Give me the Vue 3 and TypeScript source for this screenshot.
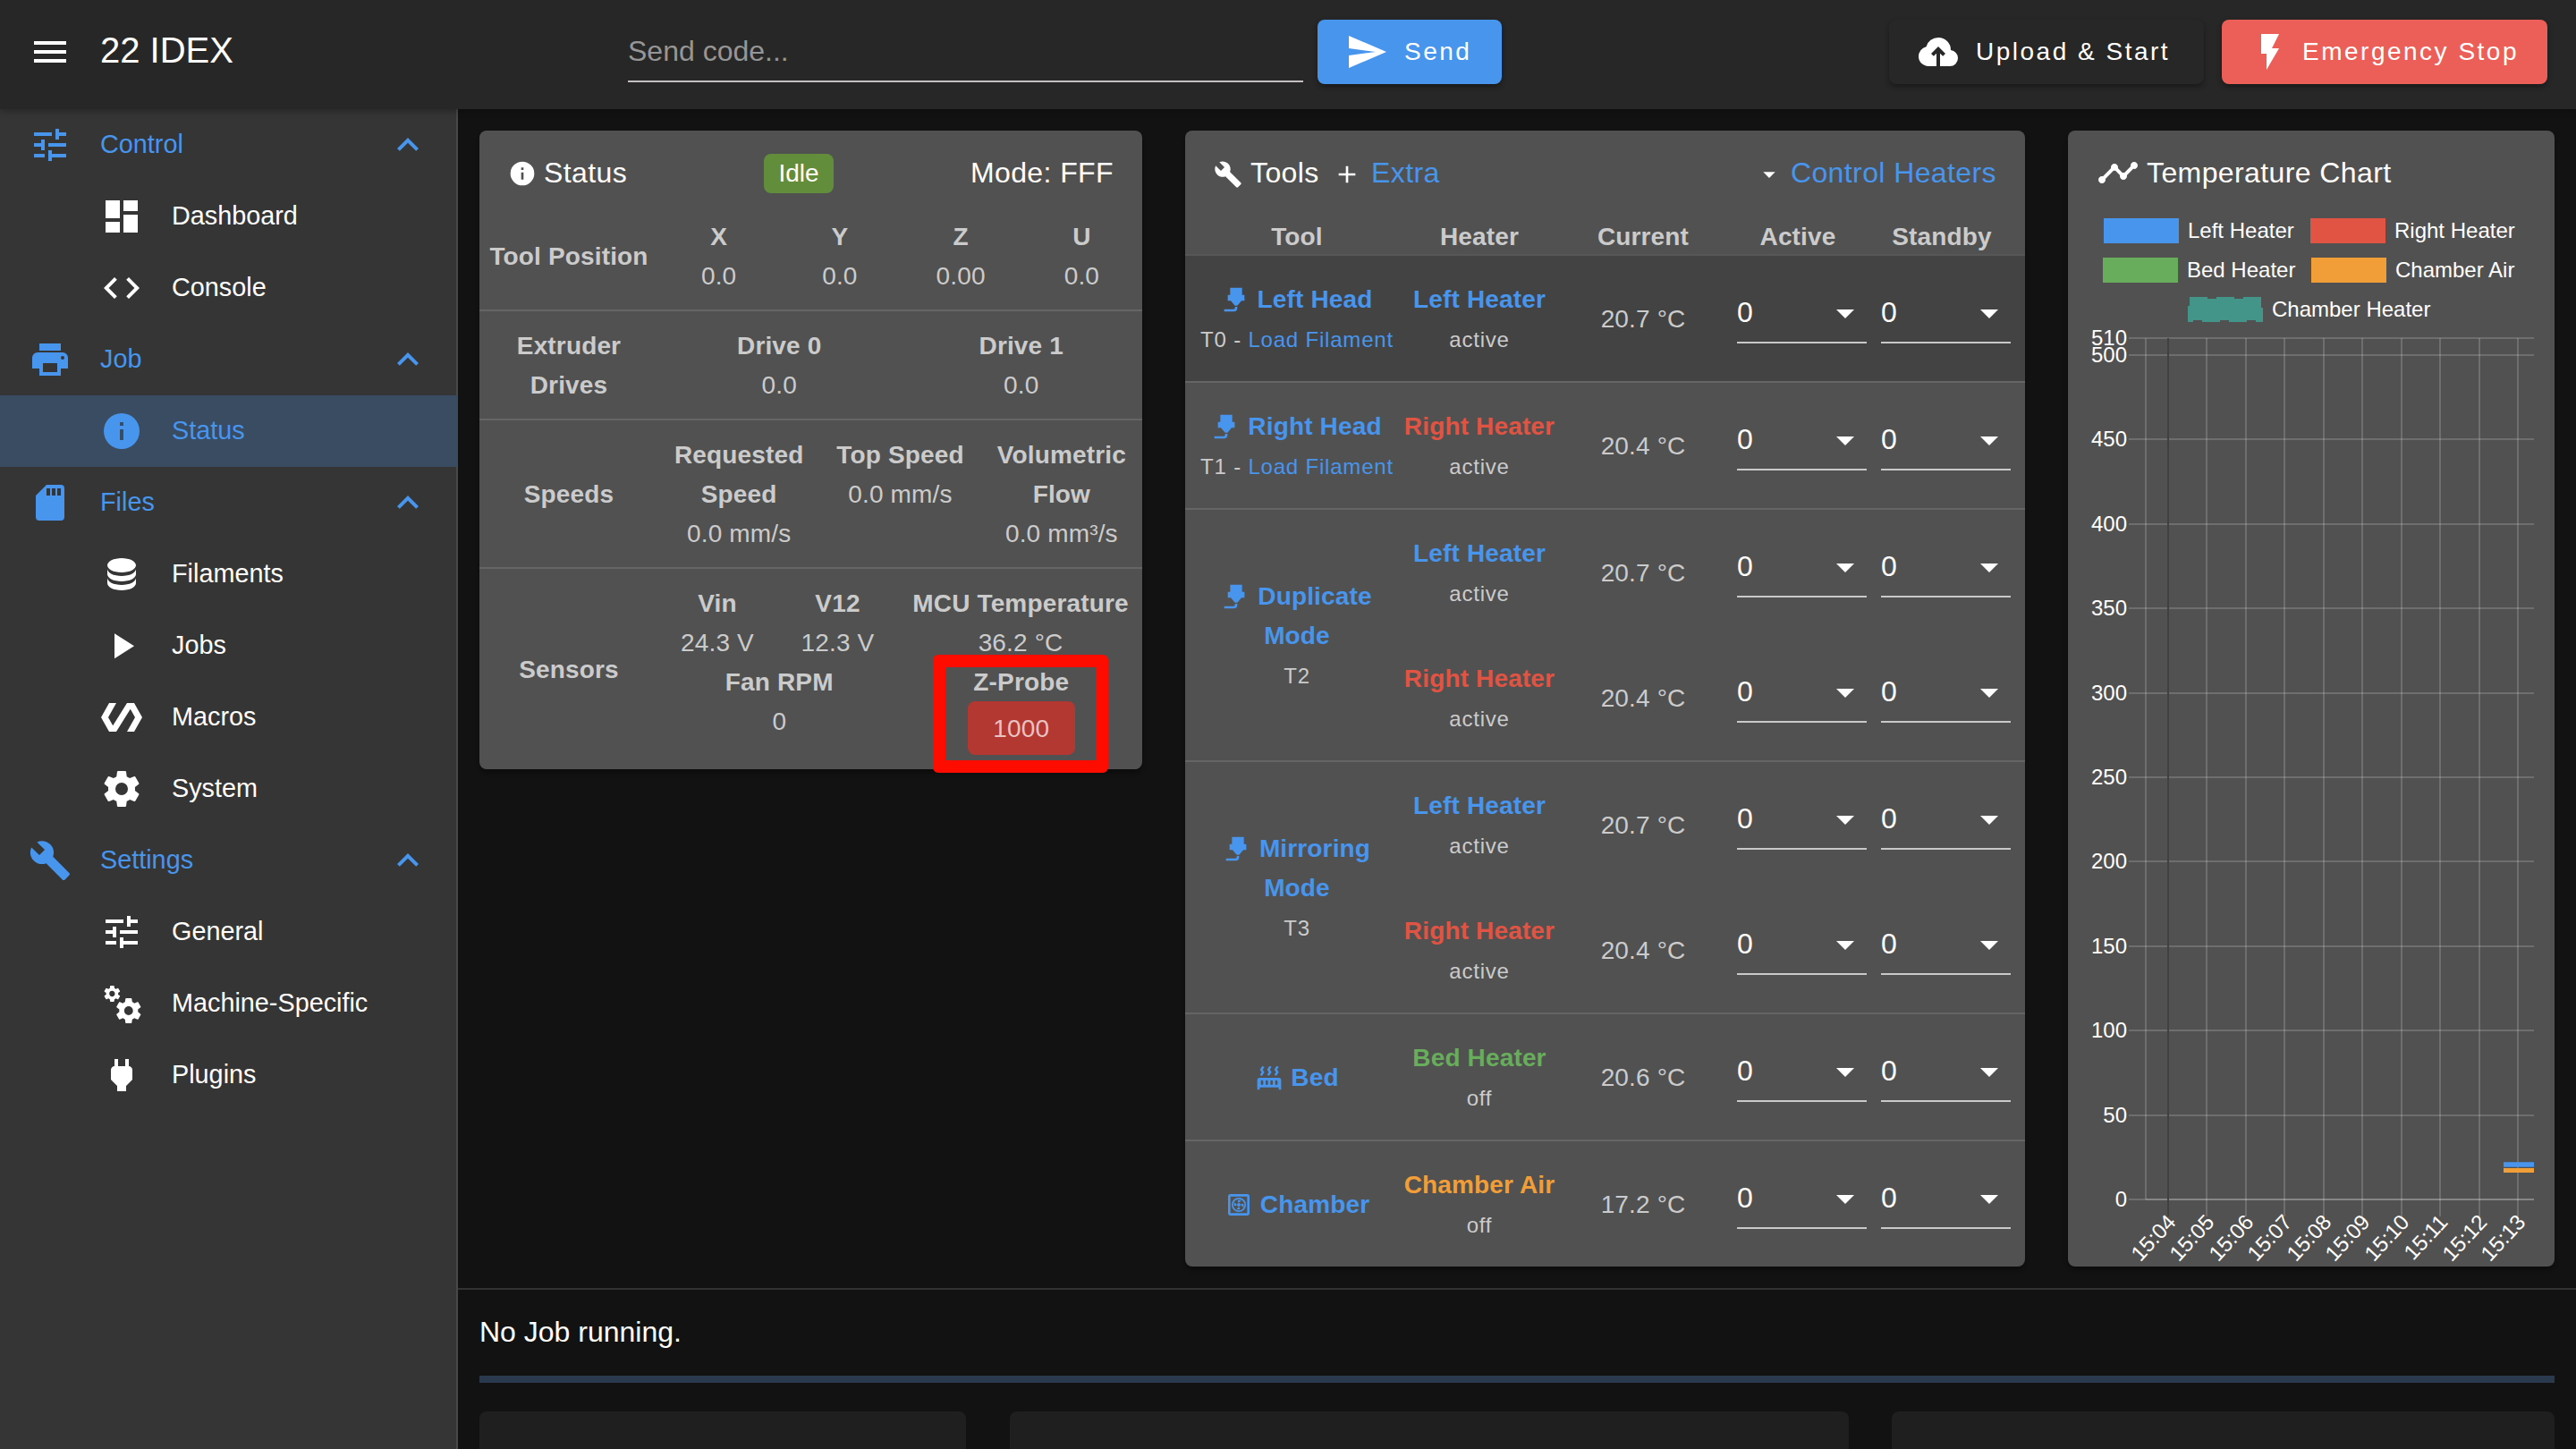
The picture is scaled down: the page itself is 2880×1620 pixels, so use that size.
<script setup lang="ts">
interface NavItem {
  label: string
  icon: string
  group?: boolean
  active?: boolean
}

interface Heater {
  name: string
  tone: string
  state: string
  current: string
}

interface ToolRow {
  icon: string
  lines: string[]
  code?: string
  filament?: boolean
  hovered?: boolean
  heaters: Heater[]
}

const icons: Record<string, string> = {
  menu: 'M3,6H21V8H3V6M3,11H21V13H3V11M3,16H21V18H3V16Z',
  tune: 'M3,17V19H9V17H3M3,5V7H13V5H3M13,21V19H21V17H13V15H11V21H13M7,9V11H3V13H7V15H9V9H7M21,13V11H11V13H21M15,9H17V7H21V5H17V3H15V9Z',
  dashboard: 'M13,3V9H21V3M13,21H21V11H13M3,21H11V15H3M3,13H11V3H3V13Z',
  code: 'M14.6,16.6L19.2,12L14.6,7.4L16,6L22,12L16,18L14.6,16.6M9.4,16.6L4.8,12L9.4,7.4L8,6L2,12L8,18L9.4,16.6Z',
  printer: 'M18,3H6V7H18M19,12A1,1 0 0,1 18,11A1,1 0 0,1 19,10A1,1 0 0,1 20,11A1,1 0 0,1 19,12M16,19H8V14H16M19,8H5A3,3 0 0,0 2,11V17H6V21H18V17H22V11A3,3 0 0,0 19,8Z',
  info: 'M13,9H11V7H13M13,17H11V11H13M12,2A10,10 0 0,0 2,12A10,10 0 0,0 12,22A10,10 0 0,0 22,12A10,10 0 0,0 12,2Z',
  sd: 'M18,8H16V4H18M15,8H13V4H15M12,8H10V4H12M18,2H10L4,8V20A2,2 0 0,0 6,22H18A2,2 0 0,0 20,20V4A2,2 0 0,0 18,2Z',
  database: 'M12,3C7.58,3 4,4.79 4,7C4,9.21 7.58,11 12,11C16.42,11 20,9.21 20,7C20,4.79 16.42,3 12,3M4,9V12C4,14.21 7.58,16 12,16C16.42,16 20,14.21 20,12V9C20,11.21 16.42,13 12,13C7.58,13 4,11.21 4,9M4,14V17C4,19.21 7.58,21 12,21C16.42,21 20,19.21 20,17V14C20,16.21 16.42,18 12,18C7.58,18 4,16.21 4,14Z',
  play: 'M8,5.14V19.14L19,12.14L8,5.14Z',
  polymer: 'M19,4H15L7.1,16.63L4.5,12L9,4H5L0.5,12L5,20H9L16.89,7.37L19.5,12L15,20H19L23.5,12L19,4Z',
  cog: 'M12,15.5A3.5,3.5 0 0,1 8.5,12A3.5,3.5 0 0,1 12,8.5A3.5,3.5 0 0,1 15.5,12A3.5,3.5 0 0,1 12,15.5M19.43,12.97C19.47,12.65 19.5,12.33 19.5,12C19.5,11.67 19.47,11.34 19.43,11L21.54,9.37C21.73,9.22 21.78,8.95 21.66,8.73L19.66,5.27C19.54,5.05 19.27,4.96 19.05,5.05L16.56,6.05C16.04,5.66 15.5,5.32 14.87,5.07L14.5,2.42C14.46,2.18 14.25,2 14,2H10C9.75,2 9.54,2.18 9.5,2.42L9.13,5.07C8.5,5.32 7.96,5.66 7.44,6.05L4.95,5.05C4.73,4.96 4.46,5.05 4.34,5.27L2.34,8.73C2.21,8.95 2.27,9.22 2.46,9.37L4.57,11C4.53,11.34 4.5,11.67 4.5,12C4.5,12.33 4.53,12.65 4.57,12.97L2.46,14.63C2.27,14.78 2.21,15.05 2.34,15.27L4.34,18.73C4.46,18.95 4.73,19.03 4.95,18.95L7.44,17.94C7.96,18.34 8.5,18.68 9.13,18.93L9.5,21.58C9.54,21.82 9.75,22 10,22H14C14.25,22 14.46,21.82 14.5,21.58L14.87,18.93C15.5,18.67 16.04,18.34 16.56,17.94L19.05,18.95C19.27,19.03 19.54,18.95 19.66,18.73L21.66,15.27C21.78,15.05 21.73,14.78 21.54,14.63L19.43,12.97Z',
  wrench: 'M22.7,19L13.6,9.9C14.5,7.6 14,4.9 12.1,3C10.1,1 7.1,0.6 4.7,1.7L9,6L6,9L1.6,4.7C0.4,7.1 0.9,10.1 2.9,12.1C4.8,14 7.5,14.5 9.8,13.6L18.9,22.7C19.3,23.1 19.9,23.1 20.3,22.7L22.6,20.4C23.1,20 23.1,19.3 22.7,19Z',
  cogs: 'M15.9,18.45C17.25,18.45 18.35,17.35 18.35,16C18.35,14.65 17.25,13.55 15.9,13.55C14.54,13.55 13.45,14.65 13.45,16C13.45,17.35 14.54,18.45 15.9,18.45M21.1,16.68L22.58,17.84C22.71,17.95 22.75,18.13 22.66,18.29L21.26,20.71C21.17,20.86 21,20.92 20.83,20.86L19.09,20.16C18.73,20.44 18.33,20.67 17.91,20.85L17.64,22.7C17.62,22.87 17.47,23 17.3,23H14.5C14.32,23 14.18,22.87 14.15,22.7L13.89,20.85C13.46,20.67 13.07,20.44 12.71,20.16L10.96,20.86C10.81,20.92 10.62,20.86 10.54,20.71L9.14,18.29C9.05,18.13 9.09,17.95 9.22,17.84L10.7,16.68L10.65,16L10.7,15.31L9.22,14.16C9.09,14.05 9.05,13.86 9.14,13.71L10.54,11.29C10.62,11.13 10.81,11.07 10.96,11.13L12.71,11.84C13.07,11.56 13.46,11.32 13.89,11.15L14.15,9.29C14.18,9.13 14.32,9 14.5,9H17.3C17.47,9 17.62,9.13 17.64,9.29L17.91,11.15C18.33,11.32 18.73,11.56 19.09,11.84L20.83,11.13C21,11.07 21.17,11.13 21.26,11.29L22.66,13.71C22.75,13.86 22.71,14.05 22.58,14.16L21.1,15.31L21.15,16L21.1,16.68M6.69,8.07C7.56,8.07 8.26,7.37 8.26,6.5C8.26,5.63 7.56,4.92 6.69,4.92A1.58,1.58 0 0,0 5.11,6.5C5.11,7.37 5.82,8.07 6.69,8.07M10.03,6.94L11,7.68C11.07,7.75 11.09,7.87 11.03,7.97L10.13,9.53C10.08,9.63 9.96,9.67 9.86,9.63L8.74,9.18L8,9.62L7.81,10.81C7.79,10.92 7.7,11 7.59,11H5.79C5.67,11 5.58,10.92 5.56,10.81L5.4,9.62L4.64,9.18L3.52,9.63C3.41,9.67 3.3,9.63 3.24,9.53L2.34,7.97C2.28,7.87 2.31,7.75 2.39,7.68L3.34,6.94L3.31,6.5L3.34,6.06L2.39,5.32C2.31,5.25 2.28,5.13 2.34,5.03L3.24,3.47C3.3,3.37 3.41,3.33 3.52,3.37L4.63,3.82L5.4,3.38L5.56,2.19C5.58,2.08 5.67,2 5.79,2H7.59C7.7,2 7.79,2.08 7.81,2.19L8,3.38L8.74,3.82L9.86,3.37C9.96,3.33 10.08,3.37 10.13,3.47L11.03,5.03C11.09,5.13 11.07,5.25 11,5.32L10.03,6.06L10.06,6.5L10.03,6.94Z',
  plug: 'M16,7V3H14V7H10V3H8V7H8C7,7 6,8 6,9V14.5L9.5,18V21H14.5V18L18,14.5V9C18,8 17,7 16,7Z',
  chevron: 'M7.41,15.41L12,10.83L16.59,15.41L18,14L12,8L6,14L7.41,15.41Z',
  send: 'M2,21L23,12L2,3V10L17,12L2,14V21Z',
  cloud: 'M11 20H6.5q-2.28 0-3.89-1.57Q1 16.85 1 14.58q0-1.95 1.17-3.48 1.18-1.53 3.08-1.95.63-2.3 2.5-3.72Q9.63 4 12 4q2.93 0 4.96 2.04Q19 8.07 19 11q1.73.2 2.86 1.5 1.14 1.28 1.14 3 0 1.88-1.31 3.19T18.5 20H13v-7.15l1.6 1.55L16 13l-4-4-4 4 1.4 1.4 1.6-1.55Z',
  flash: 'M7,2V13H10V22L17,10H13L17,2H7Z',
  plus: 'M19,13H13V19H11V13H5V11H11V5H13V11H19V13Z',
  caret: 'M7,10L12,15L17,10H7Z',
  timeline: 'M23,8C23,9.1 22.1,10 21,10C20.82,10 20.65,9.98 20.49,9.93L16.93,13.48C16.98,13.64 17,13.82 17,14C17,15.1 16.1,16 15,16C13.9,16 13,15.1 13,14C13,13.82 13.02,13.64 13.07,13.48L10.52,10.93C10.36,10.98 10.18,11 10,11C9.82,11 9.64,10.98 9.48,10.93L4.93,15.49C4.98,15.65 5,15.82 5,16C5,17.1 4.1,18 3,18C1.9,18 1,17.1 1,16C1,14.9 1.9,14 3,14C3.18,14 3.35,14.02 3.51,14.07L8.07,9.52C8.02,9.36 8,9.18 8,9C8,7.9 8.9,7 10,7C11.1,7 12,7.9 12,9C12,9.18 11.98,9.36 11.93,9.52L14.48,12.07C14.64,12.02 14.82,12 15,12C15.18,12 15.36,12.02 15.52,12.07L19.07,8.51C19.02,8.35 19,8.18 19,8C19,6.9 19.9,6 21,6C22.1,6 23,6.9 23,8Z',
  nozzle: 'M7,2H17V8H19V13H16.5L13,17H11L7.5,13H5V8H7V2M10,22H2V20H10A1,1 0 0,0 11,19V18H13V19A3,3 0 0,1 10,22Z',
  radiator: 'M7.95,3L6.53,5.19L7.95,7.4H7.94L5.95,10.5L4.22,9.6L5.64,7.39L4.22,5.19L6.22,2.09L7.95,3M13.95,2.89L12.53,5.1L13.95,7.3L13.94,7.31L11.95,10.4L10.22,9.5L11.64,7.3L10.22,5.1L12.22,2L13.95,2.89M20,2.89L18.56,5.1L20,7.3V7.31L18,10.4L16.25,9.5L17.67,7.3L16.25,5.1L18.25,2L20,2.89M2,22V14A2,2 0 0,1 4,12H20A2,2 0 0,1 22,14V22H20V20H4V22H2M6,14A1,1 0 0,0 5,15V17A1,1 0 0,0 6,18A1,1 0 0,0 7,17V15A1,1 0 0,0 6,14M10,14A1,1 0 0,0 9,15V17A1,1 0 0,0 10,18A1,1 0 0,0 11,17V15A1,1 0 0,0 10,14M14,14A1,1 0 0,0 13,15V17A1,1 0 0,0 14,18A1,1 0 0,0 15,17V15A1,1 0 0,0 14,14M18,14A1,1 0 0,0 17,15V17A1,1 0 0,0 18,18A1,1 0 0,0 19,17V15A1,1 0 0,0 18,14Z',
  chamber: 'M5,3H19A2,2 0 0,1 21,5V19A2,2 0 0,1 19,21H5A2,2 0 0,1 3,19V5A2,2 0 0,1 5,3M5,5V19H19V5H5M12,6A6,6 0 0,1 18,12A6,6 0 0,1 12,18A6,6 0 0,1 6,12A6,6 0 0,1 12,6M12,7.3A4.7,4.7 0 0,0 7.3,12A4.7,4.7 0 0,0 12,16.7A4.7,4.7 0 0,0 16.7,12A4.7,4.7 0 0,0 12,7.3M12,10.5A1.5,1.5 0 0,1 13.5,12A1.5,1.5 0 0,1 12,13.5A1.5,1.5 0 0,1 10.5,12A1.5,1.5 0 0,1 12,10.5M11.2,8H14L12.6,10H11.2V8M16,11.2V14L14,12.6V11.2H16M12.8,16H10L11.4,14H12.8V16M8,12.8V10L10,11.4V12.8H8Z'
}

const nav: NavItem[] = [
  { label: 'Control', icon: 'tune', group: true },
  { label: 'Dashboard', icon: 'dashboard' },
  { label: 'Console', icon: 'code' },
  { label: 'Job', icon: 'printer', group: true },
  { label: 'Status', icon: 'info', active: true },
  { label: 'Files', icon: 'sd', group: true },
  { label: 'Filaments', icon: 'database' },
  { label: 'Jobs', icon: 'play' },
  { label: 'Macros', icon: 'polymer' },
  { label: 'System', icon: 'cog' },
  { label: 'Settings', icon: 'wrench', group: true },
  { label: 'General', icon: 'tune' },
  { label: 'Machine-Specific', icon: 'cogs' },
  { label: 'Plugins', icon: 'plug' }
]

const left: Heater = { name: 'Left Heater', tone: 'blue', state: 'active', current: '20.7 °C' }
const right: Heater = { name: 'Right Heater', tone: 'red', state: 'active', current: '20.4 °C' }

const tools: ToolRow[] = [
  { icon: 'nozzle', lines: ['Left Head'], code: 'T0', filament: true, hovered: true, heaters: [left] },
  { icon: 'nozzle', lines: ['Right Head'], code: 'T1', filament: true, heaters: [right] },
  { icon: 'nozzle', lines: ['Duplicate', 'Mode'], code: 'T2', heaters: [left, right] },
  { icon: 'nozzle', lines: ['Mirroring', 'Mode'], code: 'T3', heaters: [left, right] },
  { icon: 'radiator', lines: ['Bed'], heaters: [{ name: 'Bed Heater', tone: 'green', state: 'off', current: '20.6 °C' }] },
  { icon: 'chamber', lines: ['Chamber'], heaters: [{ name: 'Chamber Air', tone: 'orange', state: 'off', current: '17.2 °C' }] }
]

const axes = [
  { name: 'X', value: '0.0' },
  { name: 'Y', value: '0.0' },
  { name: 'Z', value: '0.00' },
  { name: 'U', value: '0.0' }
]

// Chart geometry, in the svg's own pixels
const top = 136
const bottom = 1099
const yOf = (v: number): number => bottom - (v * (bottom - top)) / 510
const yTicks: number[] = [510, 500, 450, 400, 350, 300, 250, 200, 150, 100, 50, 0]
const xTicks = ['15:04', '15:05', '15:06', '15:07', '15:08', '15:09', '15:10', '15:11', '15:12', '15:13'].map(
  (label, i) => ({ label, x: Math.round(112 + i * 43.45) })
)
const legend = [
  { label: 'Left Heater', color: '#4895ed', x: 40, y: 2 },
  { label: 'Right Heater', color: '#e15342', x: 271, y: 2 },
  { label: 'Bed Heater', color: '#67ad5b', x: 39, y: 46 },
  { label: 'Chamber Air', color: '#f19e38', x: 272, y: 46 }
]
</script>

<template>
  <div class="app">
    <header class="bar">
      <svg class="i48" viewBox="0 0 24 24"><path :d="icons.menu" /></svg>
      <div class="title">22 IDEX</div>
      <div class="code-input">Send code...</div>
      <div class="btn send"><svg class="i48" viewBox="0 0 24 24"><path :d="icons.send" /></svg>Send</div>
      <div class="btn upload"><svg class="i48" viewBox="0 0 24 24"><path :d="icons.cloud" /></svg>Upload &amp; Start</div>
      <div class="btn stop"><svg class="i48" viewBox="0 0 24 24"><path :d="icons.flash" /></svg>Emergency Stop</div>
    </header>

    <div class="body">
      <nav class="side">
        <div v-for="n in nav" :key="n.label" class="nav-item" :class="{ group: n.group, active: n.active }">
          <svg class="i48" viewBox="0 0 24 24"><path :d="icons[n.icon]" /></svg>
          <span class="nav-label">{{ n.label }}</span>
          <svg v-if="n.group" class="i48" viewBox="0 0 24 24"><path :d="icons.chevron" /></svg>
        </div>
      </nav>

      <main class="main">
        <section class="panels">
          <div class="card status">
            <div class="card-title">
              <svg class="i32" viewBox="0 0 24 24"><path :d="icons.info" /></svg>
              <span class="status-name">Status</span>
              <span class="chip">Idle</span>
              <span class="mode">Mode: FFF</span>
            </div>
            <div class="srow first">
              <div class="slabel"><span>Tool Position</span></div>
              <div class="svals">
                <div class="cells">
                  <div v-for="a in axes" :key="a.name" class="cell"><strong>{{ a.name }}</strong><span>{{ a.value }}</span></div>
                </div>
              </div>
            </div>
            <div class="srow">
              <div class="slabel"><span>Extruder</span><span>Drives</span></div>
              <div class="svals">
                <div class="cells">
                  <div class="cell"><strong>Drive 0</strong><span>0.0</span></div>
                  <div class="cell"><strong>Drive 1</strong><span>0.0</span></div>
                </div>
              </div>
            </div>
            <div class="srow">
              <div class="slabel"><span>Speeds</span></div>
              <div class="svals">
                <div class="cells">
                  <div class="cell"><strong>Requested</strong><strong>Speed</strong><span>0.0 mm/s</span></div>
                  <div class="cell"><strong>Top Speed</strong><span>0.0 mm/s</span></div>
                  <div class="cell"><strong>Volumetric</strong><strong>Flow</strong><span>0.0 mm³/s</span></div>
                </div>
              </div>
            </div>
            <div class="srow">
              <div class="slabel"><span>Sensors</span></div>
              <div class="svals">
                <div class="cells sensors">
                  <div class="cell"><strong>Vin</strong><span>24.3 V</span></div>
                  <div class="cell"><strong>V12</strong><span>12.3 V</span></div>
                  <div class="cell"><strong>MCU Temperature</strong><span>36.2 °C</span></div>
                </div>
                <div class="cells">
                  <div class="cell"><strong>Fan RPM</strong><span>0</span></div>
                  <div class="cell probe"><strong>Z-Probe</strong><span class="probe-value">1000</span><i class="marker"></i></div>
                </div>
              </div>
            </div>
          </div>

          <div class="card tools">
            <div class="card-title">
              <svg class="i32" viewBox="0 0 24 24"><path :d="icons.wrench" /></svg>
              <span class="tools-name">Tools</span>
              <svg class="i32" viewBox="0 0 24 24"><path :d="icons.plus" /></svg>
              <span class="extra">Extra</span>
              <svg class="i32 push" viewBox="0 0 24 24"><path :d="icons.caret" /></svg>
              <span class="heaters-link">Control Heaters</span>
            </div>
            <div class="thead">
              <span>Tool</span><span>Heater</span><span>Current</span><span>Active</span><span>Standby</span>
            </div>
            <div v-for="(t, ti) in tools" :key="ti" class="trow" :class="{ hovered: t.hovered }">
              <div class="tcell">
                <strong class="blue">
                  <svg class="i32 tool-icon" viewBox="0 0 24 24"><path :d="icons[t.icon]" fill-rule="evenodd" /></svg>{{ t.lines[0] }}
                </strong>
                <strong v-if="t.lines[1]" class="blue">{{ t.lines[1] }}</strong>
                <div v-if="t.code"><small>{{ t.code }}<template v-if="t.filament"> - <span class="blue">Load Filament</span></template></small></div>
              </div>
              <div class="theaters">
                <div v-for="h in t.heaters" :key="h.name" class="heater">
                  <div class="hname"><strong :class="h.tone">{{ h.name }}</strong><div><small>{{ h.state }}</small></div></div>
                  <div class="hcur">{{ h.current }}</div>
                  <div class="select">0<svg class="i48" viewBox="0 0 24 24"><path :d="icons.caret" /></svg></div>
                  <div class="select">0<svg class="i48" viewBox="0 0 24 24"><path :d="icons.caret" /></svg></div>
                </div>
              </div>
            </div>
          </div>

          <div class="card chart">
            <div class="card-title">
              <svg class="i48" viewBox="0 0 24 24"><path :d="icons.timeline" /></svg>
              <span class="chart-name">Temperature Chart</span>
            </div>
            <svg class="plot" width="544" height="1174" viewBox="0 0 544 1174">
              <g v-for="l in legend" :key="l.label">
                <rect :x="l.x" :y="l.y" width="84" height="28" :fill="l.color" />
                <text :x="l.x + 94" :y="l.y + 22">{{ l.label }}</text>
              </g>
              <rect x="136" y="92" width="80" height="24" fill="#439489" />
              <rect x="136" y="92" width="80" height="24" fill="none" stroke="#439489" stroke-width="4" stroke-dasharray="20 10" />
              <text x="228" y="112">Chamber Heater</text>

              <g v-for="v in yTicks" :key="v">
                <line x1="68" x2="521" :y1="Math.round(yOf(v))" :y2="Math.round(yOf(v))" class="grid" />
                <text x="66" :y="yOf(v) + 8" text-anchor="end">{{ v }}</text>
              </g>
              <line x1="87" x2="521" :y1="bottom" :y2="bottom" class="grid" />
              <line x1="87" x2="87" :y1="top" :y2="bottom" class="grid" />
              <g v-for="(t, i) in xTicks" :key="t.label">
                <line :x1="t.x" :x2="t.x" :y1="top" :y2="bottom + 19" :class="i === 0 ? 'grid-dark' : 'grid'" />
                <text :transform="`translate(${t.x + 4} 1120) rotate(-47)`" y="8" text-anchor="end">{{ t.label }}</text>
              </g>
              <line x1="487" x2="521" :y1="yOf(17.2)" :y2="yOf(17.2)" stroke="#f19e38" stroke-width="5" />
              <line x1="487" x2="521" :y1="yOf(20.7)" :y2="yOf(20.7)" stroke="#4895ed" stroke-width="5.5" />
            </svg>
          </div>
        </section>

        <section class="job">
          <div class="job-text">No Job running.</div>
          <div class="progress"></div>
          <div class="job-cards">
            <div class="job-card a"></div>
            <div class="job-card b"></div>
            <div class="job-card c"></div>
          </div>
        </section>
      </main>
    </div>
  </div>
</template>

<style>
body {
  background: #121212;
}
</style>

<style scoped>
.app {
  width: 2880px;
  height: 1620px;
  overflow: hidden;
  display: flex;
  flex-direction: column;
  background: #121212;
  color: #fff;
  font-family: "Liberation Sans", Arial, sans-serif;
  font-size: 28px;
  line-height: 44px;
  white-space: nowrap;
}
svg {
  fill: currentColor;
  flex: none;
}
.i48 {
  width: 48px;
  height: 48px;
}
.i32 {
  width: 32px;
  height: 32px;
  position: relative;
  top: 1px;
}
.blue {
  color: #4895ed;
}
.red {
  color: #e15342;
}
.green {
  color: #67ad5b;
}
.orange {
  color: #f19e38;
}

.bar {
  position: relative;
  z-index: 2;
  flex: none;
  box-sizing: border-box;
  height: 122px;
  padding: 0 32px 6px;
  display: flex;
  align-items: center;
  background: #272727;
  box-shadow: 0 2px 8px rgba(0, 0, 0, 0.3);
}
.title {
  width: 590px;
  margin-left: 32px;
  padding-bottom: 4px;
  font-size: 40px;
}
.code-input {
  box-sizing: border-box;
  width: 755px;
  height: 68px;
  border-bottom: 2px solid #c3bfc3;
  color: #969696;
  font-size: 32px;
  line-height: 66px;
}
.btn {
  box-sizing: border-box;
  height: 72px;
  display: flex;
  align-items: center;
  gap: 18px;
  padding-left: 31px;
  border-radius: 8px;
  letter-spacing: 2.5px;
  line-height: 74px;
  box-shadow: 0 4px 6px -2px rgba(0, 0, 0, 0.3), 0 2px 6px rgba(0, 0, 0, 0.18);
}
.send {
  width: 206px;
  margin-left: 16px;
  background: #4895ed;
}
.upload {
  width: 352px;
  margin-left: auto;
  background: #272727;
}
.stop {
  width: 364px;
  margin-left: 20px;
  padding-left: 30px;
  gap: 12px;
  background: #ec5f59;
}

.body {
  flex: 1;
  min-height: 0;
  display: flex;
}
.side {
  flex: none;
  box-sizing: border-box;
  width: 512px;
  border-right: 2px solid #484848;
  background: #353535;
}
.nav-item {
  box-sizing: border-box;
  height: 80px;
  padding: 0 30px 0 112px;
  display: flex;
  align-items: center;
  font-size: 28.8px;
}
.nav-item.group {
  padding-left: 32px;
  color: #4895ed;
}
.nav-item.active {
  margin-right: -2px;
  background: #3a4c61;
  color: #4895ed;
}
.nav-label {
  flex: 1;
  margin-left: 32px;
  padding-bottom: 3px;
}

.main {
  flex: 1;
  min-width: 0;
}
.panels {
  display: flex;
  align-items: flex-start;
  height: 1294px;
  padding: 24px 24px 0;
}
.card {
  flex: none;
  overflow: hidden;
  border-radius: 8px;
  background: #515151;
  box-shadow: 0 4px 4px rgba(0, 0, 0, 0.3);
}
.card-title {
  box-sizing: border-box;
  height: 97px;
  display: flex;
  align-items: center;
  padding: 0 32px 3px;
  font-size: 32px;
  letter-spacing: 0.4px;
}
.status {
  position: relative;
  overflow: visible;
  width: 741px;
  height: 714px;
  color: #cbcbcb;
  letter-spacing: 0.15px;
}
.status .card-title {
  color: #fff;
}
.status-name {
  width: 246px;
  margin-left: 8px;
}
.chip {
  width: 78px;
  height: 44px;
  margin-top: 2px;
  border-radius: 8px;
  background: #628e3b;
  font-size: 28px;
  letter-spacing: 0;
  text-align: center;
}
.mode {
  margin-left: auto;
}
.srow {
  display: flex;
  padding: 17px 0 15px;
}
.srow.first {
  padding-top: 0;
}
.srow + .srow {
  border-top: 2px solid #656565;
}
.slabel {
  width: 200px;
  display: flex;
  flex-direction: column;
  justify-content: center;
  align-items: center;
  font-weight: bold;
}
.svals {
  flex: 1;
}
.cells {
  display: grid;
  grid-auto-flow: column;
  grid-auto-columns: 1fr;
}
.cells.sensors {
  grid-template-columns: 132px 137px 272px;
}
.cell {
  display: flex;
  flex-direction: column;
  align-items: center;
}
.probe {
  position: relative;
}
.probe-value {
  width: 120px;
  height: 60px;
  margin-top: -1px;
  border-radius: 8px;
  background: #b23831;
  color: #e8c3c1;
  line-height: 62px;
  text-align: center;
}
.marker {
  position: absolute;
  left: 36px;
  top: -9px;
  box-sizing: border-box;
  width: 196px;
  height: 132px;
  border: 14px solid #ff0c00;
  border-radius: 6px;
}

.tools {
  width: 939px;
  height: 1270px;
  margin-left: 48px;
  color: #cbcbcb;
  letter-spacing: 0.15px;
}
.tools .card-title {
  color: #fff;
}
.tools .i32 {
  top: 2px;
}
.tools-name {
  width: 92px;
  margin-left: 9px;
}
.extra {
  margin-left: 11px;
  color: #4895ed;
}
.push {
  margin-left: auto;
}
.heaters-link {
  margin-left: 8px;
  color: #4895ed;
}
.thead {
  box-sizing: border-box;
  height: 43px;
  padding-left: 8px;
  display: grid;
  grid-template-columns: 234px 174px 192px 154px 168px;
  grid-template-rows: 41px;
  border-bottom: 2px solid #575757;
  font-weight: bold;
  text-align: center;
}
.trow {
  display: flex;
  align-items: center;
  padding-left: 8px;
}
.trow.hovered {
  background: #434343;
}
.trow + .trow {
  border-top: 2px solid #656565;
}
.tcell {
  width: 234px;
  padding-top: 2px;
  text-align: center;
}
.tcell strong,
.hname strong {
  display: block;
  height: 44px;
}
.tool-icon {
  margin-right: 8px;
  vertical-align: -7px;
}
.tools .tool-icon {
  top: 0;
}
small {
  font-size: 24px;
  letter-spacing: 0.8px;
}
.heater {
  height: 140px;
  display: flex;
  align-items: center;
}
.hname {
  width: 174px;
  padding-top: 2px;
  text-align: center;
}
.hcur {
  width: 192px;
  margin-right: 9px;
  padding-top: 2px;
  text-align: center;
}
.select {
  box-sizing: border-box;
  width: 145px;
  height: 66px;
  margin: -10px 16px 0 0;
  padding-bottom: 2px;
  display: flex;
  align-items: center;
  justify-content: space-between;
  border-bottom: 2px solid #c9c9c9;
  color: #fff;
  font-size: 32px;
}
.select .i48 {
  position: relative;
  top: 1px;
}

.chart {
  width: 544px;
  height: 1270px;
  margin-left: 48px;
}
.chart-name {
  margin-left: 8px;
}
.plot {
  display: block;
  margin-top: -1px;
  font-size: 24px;
}
.plot text {
  fill: #fff;
}
.grid {
  stroke: rgba(255, 255, 255, 0.17);
  stroke-width: 2;
}
.grid-dark {
  stroke: #404040;
  stroke-width: 2;
}

.job {
  height: 180px;
  padding: 0 24px;
  border-top: 2px solid #323232;
}
.job-text {
  padding-top: 25px;
  font-size: 32px;
}
.progress {
  height: 8px;
  margin: 27px 0 32px;
  background: #2a394e;
}
.job-cards {
  display: flex;
}
.job-card {
  height: 80px;
  border-radius: 8px;
  background: #1f1f1f;
}
.job-card.a {
  width: 544px;
}
.job-card.b {
  width: 938px;
  margin: 0 48px 0 49px;
}
.job-card.c {
  flex: 1;
}
</style>
